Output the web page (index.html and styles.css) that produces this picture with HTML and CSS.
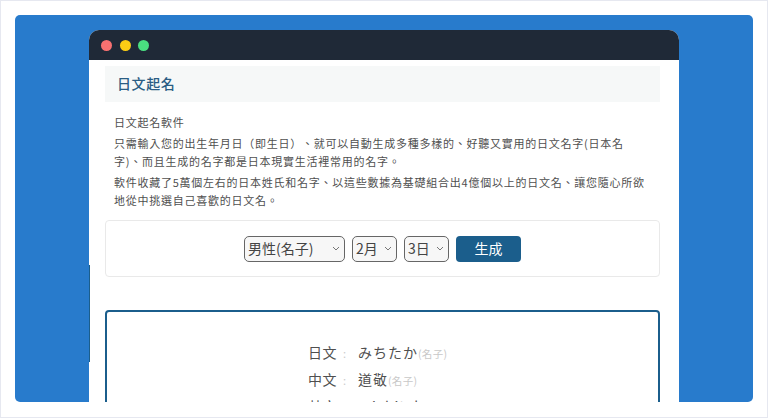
FILE: index.html
```html
<!DOCTYPE html>
<html lang="zh-Hant">
<head>
<meta charset="utf-8">
<title>日文起名</title>
<link rel="stylesheet" href="styles.css">
</head>
<body>
<div class="frame">
  <div class="panel">
    <div class="window">
      <div class="titlebar">
        <span class="dot dot-red"></span>
        <span class="dot dot-yellow"></span>
        <span class="dot dot-green"></span>
      </div>
      <div class="content">
        <h1 class="heading">日文起名</h1>
        <div class="intro">
          <p class="intro-title">日文起名軟件</p>
          <p>只需輸入您的出生年月日（即生日）、就可以自動生成多種多樣的、好聽又實用的日文名字(日本名字)、而且生成的名字都是日本現實生活裡常用的名字。</p>
          <p>軟件收藏了5萬個左右的日本姓氏和名字、以這些數據為基礎組合出4億個以上的日文名、讓您隨心所欲地從中挑選自己喜歡的日文名。</p>
        </div>
        <form class="form-card">
          <select class="select select-gender"><option>男性(名子)</option></select>
          <select class="select select-short"><option>2月</option></select>
          <select class="select select-short"><option>3日</option></select>
          <button type="button" class="submit">生成</button>
        </form>
        <div class="result-card">
          <div class="result-row"><span class="label">日文</span><span class="colon">:</span><span class="value">みちたか</span><span class="note">(名子)</span></div>
          <div class="result-row"><span class="label">中文</span><span class="colon">:</span><span class="value">道敬</span><span class="note">(名子)</span></div>
          <div class="result-row"><span class="label">英文</span><span class="colon">:</span><span class="value">michitaka</span></div>
        </div>
      </div>
    </div>
    <span class="edge-strip"></span>
  </div>
</div>
</body>
</html>
```
FILE: styles.css
```css
* { box-sizing: border-box; }
html, body { margin: 0; height: 100%; }
body {
  background: #fff;
  font-family: "Noto Sans CJK TC", "Noto Sans", sans-serif;
  color: #4a4a4a;
}
.frame {
  width: 768px;
  height: 418px;
  border: 1px solid #e6e8f0;
  padding: 14px 14px 15px 14px;
}
.panel {
  position: relative;
  height: 387px;
  background: #287bcc;
  border-radius: 5px;
  padding: 15px 74px 0 74px;
  overflow: hidden;
}
.edge-strip {
  position: absolute;
  left: 74px;
  top: 250px;
  width: 1px;
  height: 97px;
  background: #1b5e8c;
}
.window {
  height: 372px;
  background: #fff;
  border-radius: 10px 10px 0 0;
  overflow: hidden;
}
.titlebar {
  height: 30px;
  background: #1f2937;
  display: flex;
  align-items: center;
  gap: 7.5px;
  padding-left: 12px;
}
.dot { width: 11px; height: 11px; border-radius: 50%; }
.dot-red { background: #f87171; }
.dot-yellow { background: #facc15; }
.dot-green { background: #4ade80; }
.content { padding: 6px 19px 0 16px; }
.heading {
  margin: 0;
  height: 36px;
  background: #f6f8f8;
  padding: 0 12px;
  font-size: 14px;
  line-height: 34px;
  font-weight: 500;
  letter-spacing: 0.6px;
  color: #2b5d84;
}
.intro {
  padding: 11px 10px 0 9px;
  font-size: 11px;
  color: #4f4f4f;
  letter-spacing: 0.75px;
  text-spacing-trim: space-all;
}
.intro p { margin: 0 0 3px; line-height: 18px; }
.form-card {
  margin-top: 11px;
  height: 57px;
  border: 1px solid #e9e9e9;
  border-radius: 4px;
  display: flex;
  align-items: center;
  justify-content: center;
  gap: 7px;
}
.select {
  appearance: none;
  height: 26px;
  border: 1px solid #666;
  border-radius: 5px;
  background-color: #f7f7f7;
  background-image: url("data:image/svg+xml,%3Csvg xmlns='http://www.w3.org/2000/svg' width='8' height='5'%3E%3Cpath d='M1 1l3 3 3-3' fill='none' stroke='%23777' stroke-width='1'/%3E%3C/svg%3E");
  background-repeat: no-repeat;
  background-position: right 4px center;
  font-family: inherit;
  font-size: 14px;
  color: #444;
  padding: 0 0 2px 3px;
}
.select-gender { width: 101px; }
.select-short { width: 45px; }
.submit {
  width: 65px;
  height: 26px;
  border: 0;
  border-radius: 4px;
  background: #1b5e8c;
  color: #fff;
  font-family: inherit;
  font-size: 14px;
  padding: 0 0 2px;
}
.result-card {
  margin-top: 33px;
  height: 160px;
  border: 2px solid #1b5e8c;
  border-radius: 4px;
  padding: 27px 0 0 201px;
}
.result-row { display: flex; align-items: baseline; height: 27px; line-height: 27px; }
.label { width: 35px; font-size: 14px; color: #4f4f4f; letter-spacing: 0.6px; }
.colon { width: 15px; font-size: 11px; color: #ccc; }
.value { font-size: 14px; color: #4f4f4f; letter-spacing: 1px; }
.note { font-size: 10.5px; color: #c8c8c8; letter-spacing: 0.3px; }
```
